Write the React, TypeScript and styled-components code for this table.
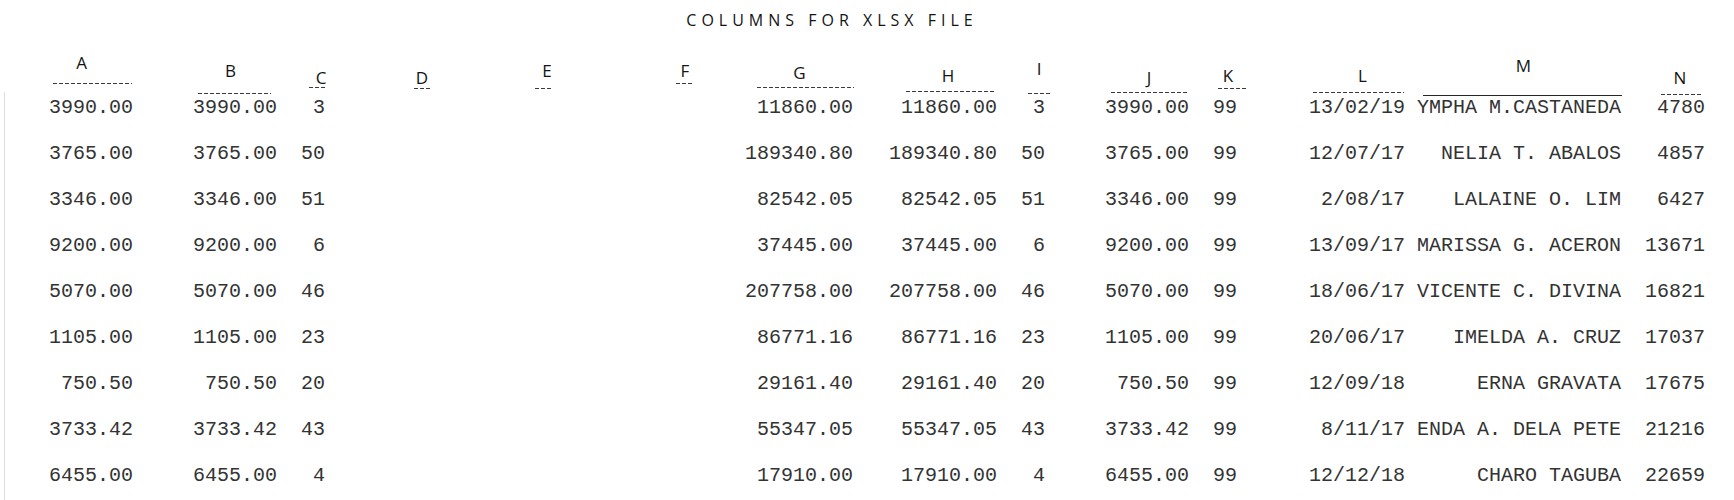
import React from "react";
import styled, { createGlobalStyle } from "styled-components";

const GlobalStyle = createGlobalStyle`
  html, body {
    margin: 0;
    padding: 0;
    background: #ffffff;
  }
  body {
    font-family: "Open Sans", "Liberation Sans", sans-serif;
    color: #222;
  }
`;

const COLS = "128px 144px 48px 120px 120px 144px 144px 144px 48px 144px 48px 168px 216px 84px";

const Page = styled.div`
  width: 1734px;
  height: 500px;
  overflow: hidden;
  display: flex;
  flex-direction: column;
`;

const Title = styled.div`
  width: 1664px;
  padding: 9px 0 9px;
  text-align: center;
  font-family: "Open Sans", "Liberation Sans", sans-serif;
  font-size: 16px;
  line-height: 22px;
  letter-spacing: 5px;
  color: #141414;
`;

const Head = styled.div`
  display: grid;
  grid-template-columns: ${COLS};
  height: 52px;
  padding-left: 5px;
  align-items: start;
`;

const HeadCell = styled.div<{ $x: number; $w: number; $top: number }>`
  justify-self: start;
  display: flex;
  flex-direction: column;
  margin-left: ${(p) => p.$x}px;
  width: ${(p) => p.$w}px;
  padding-top: ${(p) => p.$top}px;
`;

const Letter = styled.div<{ $shift: number }>`
  font-family: "Open Sans", "Liberation Sans", sans-serif;
  font-size: 17px;
  line-height: 17px;
  color: #141414;
  text-align: center;
  transform: translateX(${(p) => p.$shift}px);
  white-space: nowrap;
`;

const Dash = styled.div<{ $gap: number; $solid?: boolean }>`
  margin-top: ${(p) => p.$gap}px;
  height: 1px;
  background: ${(p) =>
    p.$solid
      ? "#262626"
      : "repeating-linear-gradient(to right, #3a3a3a 0 4px, transparent 4px 6px)"};
`;

const Body = styled.div`
  display: grid;
  grid-template-columns: ${COLS};
  row-gap: 22px;
  margin-left: 4px;
  border-left: 1px solid #dedede;
  padding-top: 4.4px;
  padding-bottom: 40px;
`;

const Cell = styled.div`
  font-family: "Liberation Mono", "Courier New", monospace;
  font-size: 20px;
  line-height: 24px;
  color: #333333;
  text-align: right;
  white-space: pre;
`;

type Header = {
  label: string;
  x: number;
  w: number;
  cap: number;
  dash: number;
  shift: number;
  solid?: boolean;
};

const HEAD_TOP = 40;

const headers: Header[] = [
  { label: "A", x: 48, w: 79, cap: 57, dash: 83, shift: -11 },
  { label: "B", x: 65, w: 73, cap: 65, dash: 93, shift: -4 },
  { label: "C", x: 32, w: 16, cap: 72, dash: 87, shift: 4 },
  { label: "D", x: 89, w: 16, cap: 72, dash: 88, shift: 0 },
  { label: "E", x: 90, w: 16, cap: 65, dash: 88, shift: 4 },
  { label: "F", x: 111, w: 16, cap: 65, dash: 83, shift: 1 },
  { label: "G", x: 48, w: 97, cap: 67, dash: 87, shift: -6 },
  { label: "H", x: 53, w: 90, cap: 70, dash: 91, shift: -3 },
  { label: "I", x: 31, w: 22, cap: 63, dash: 93, shift: 0 },
  { label: "J", x: 66, w: 78, cap: 72, dash: 92, shift: -1 },
  { label: "K", x: 29, w: 28, cap: 70, dash: 88, shift: -4 },
  { label: "L", x: 76, w: 91, cap: 70, dash: 92, shift: 4 },
  { label: "M", x: 18, w: 199, cap: 60, dash: 95, shift: 1, solid: true },
  { label: "N", x: 40, w: 42, cap: 72, dash: 94, shift: -2 },
];

const rows: string[][] = [
  ["3990.00", "3990.00", "3", "", "", "", "11860.00", "11860.00", "3", "3990.00", "99", "13/02/19", "YMPHA M.CASTANEDA", "4780"],
  ["3765.00", "3765.00", "50", "", "", "", "189340.80", "189340.80", "50", "3765.00", "99", "12/07/17", "NELIA T. ABALOS", "4857"],
  ["3346.00", "3346.00", "51", "", "", "", "82542.05", "82542.05", "51", "3346.00", "99", "2/08/17", "LALAINE O. LIM", "6427"],
  ["9200.00", "9200.00", "6", "", "", "", "37445.00", "37445.00", "6", "9200.00", "99", "13/09/17", "MARISSA G. ACERON", "13671"],
  ["5070.00", "5070.00", "46", "", "", "", "207758.00", "207758.00", "46", "5070.00", "99", "18/06/17", "VICENTE C. DIVINA", "16821"],
  ["1105.00", "1105.00", "23", "", "", "", "86771.16", "86771.16", "23", "1105.00", "99", "20/06/17", "IMELDA A. CRUZ", "17037"],
  ["750.50", "750.50", "20", "", "", "", "29161.40", "29161.40", "20", "750.50", "99", "12/09/18", "ERNA GRAVATA", "17675"],
  ["3733.42", "3733.42", "43", "", "", "", "55347.05", "55347.05", "43", "3733.42", "99", "8/11/17", "ENDA A. DELA PETE", "21216"],
  ["6455.00", "6455.00", "4", "", "", "", "17910.00", "17910.00", "4", "6455.00", "99", "12/12/18", "CHARO TAGUBA", "22659"],
];

export default function App() {
  return (
    <>
      <GlobalStyle />
      <Page>
        <Title>COLUMNS FOR XLSX FILE</Title>
        <Head>
          {headers.map((h) => {
            const boxTop = h.cap - 3;
            const pad = boxTop - HEAD_TOP;
            const gap = h.dash - (boxTop + 17);
            return (
              <HeadCell key={h.label} $x={h.x} $w={h.w} $top={pad}>
                <Letter $shift={h.shift}>{h.label}</Letter>
                <Dash $gap={gap} $solid={h.solid} />
              </HeadCell>
            );
          })}
        </Head>
        <Body>
          {rows.map((r, i) =>
            r.map((v, j) => <Cell key={`${i}-${j}`}>{v}</Cell>)
          )}
        </Body>
      </Page>
    </>
  );
}
